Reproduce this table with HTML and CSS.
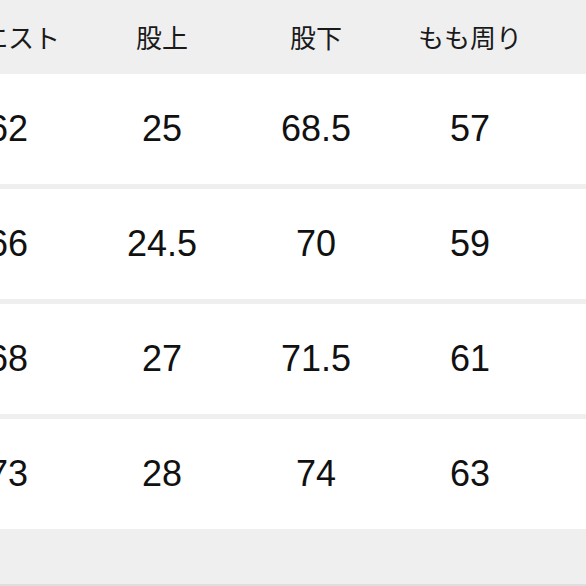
FILE: index.html
```html
<!DOCTYPE html>
<html lang="ja">
<head>
<meta charset="utf-8">
<title>サイズ表</title>
<link rel="stylesheet" href="styles.css">
</head>
<body>
<div class="sheet">
  <div class="table">
    <div class="head">
      <div class="cell">ウエスト</div>
      <div class="cell">股上</div>
      <div class="cell">股下</div>
      <div class="cell">もも周り</div>
      <div class="cell">裾幅</div>
    </div>
    <div class="row">
      <div class="cell">62</div>
      <div class="cell">25</div>
      <div class="cell">68.5</div>
      <div class="cell">57</div>
      <div class="cell">20</div>
    </div>
    <div class="row">
      <div class="cell">66</div>
      <div class="cell">24.5</div>
      <div class="cell">70</div>
      <div class="cell">59</div>
      <div class="cell">21</div>
    </div>
    <div class="row">
      <div class="cell">68</div>
      <div class="cell">27</div>
      <div class="cell">71.5</div>
      <div class="cell">61</div>
      <div class="cell">22</div>
    </div>
    <div class="row">
      <div class="cell">73</div>
      <div class="cell">28</div>
      <div class="cell">74</div>
      <div class="cell">63</div>
      <div class="cell">23</div>
    </div>
  </div>
</div>
</body>
</html>
```
FILE: styles.css
```css
html, body {
  margin: 0;
  padding: 0;
  background: #efefef;
}

.sheet {
  width: 586px;
  height: 586px;
  overflow: hidden;
  background: #efefef;
  box-sizing: border-box;
  border-bottom: 2px solid #dedede;
}

.table {
  width: 770px;
  margin-left: -69px;
  display: flex;
  flex-direction: column;
  gap: 5px;
}

.head,
.row {
  display: grid;
  grid-template-columns: repeat(5, 154px);
  align-items: center;
  justify-items: center;
}

.head {
  height: 74px;
  margin-bottom: -5px;
  font-family: "Noto Sans CJK JP", "Noto Sans", sans-serif;
  font-size: 26px;
  color: #1a1a1a;
}

.row {
  height: 110px;
  background: #ffffff;
  font-family: "Liberation Sans", Arial, sans-serif;
  font-size: 36px;
  color: #111111;
}

.cell {
  white-space: nowrap;
  line-height: 1;
}
```
